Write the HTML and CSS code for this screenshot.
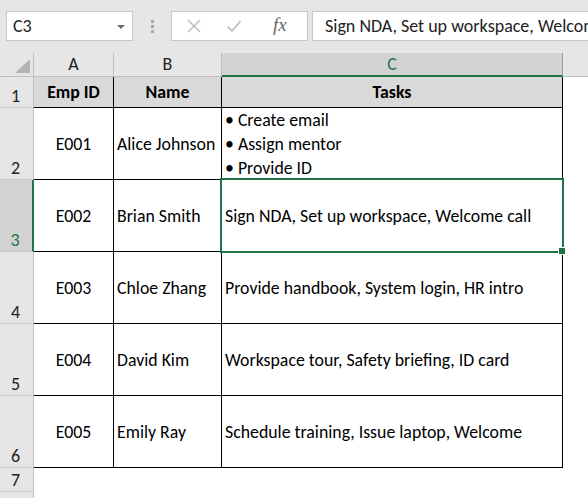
FILE: index.html
```html
<!DOCTYPE html>
<html>
<head>
<meta charset="utf-8">
<link rel="stylesheet" href="styles.css">
</head>
<body>
<div class="toolbar">
  <div class="namebox"><span class="name">C3</span><span class="drop"></span></div>
  <div class="grip"><i></i><i></i><i></i></div>
  <div class="fxbox">
    <svg class="ic-x" width="14" height="14" viewBox="0 0 14 14"><path d="M1 1L13 13M13 1L1 13" stroke="#bdbdbd" stroke-width="1.5" fill="none"/></svg>
    <svg class="ic-ok" width="16" height="14" viewBox="0 0 16 14"><path d="M1.5 7.5L6 12L14.5 2" stroke="#c2c2c2" stroke-width="1.8" fill="none"/></svg>
    <span class="fx">fx</span>
  </div>
  <div class="formula">Sign NDA, Set up workspace, Welcome call</div>
</div>
<div class="sheet">
  <div class="corner"><span class="tri"></span></div>
  <div class="colhead">A</div>
  <div class="colhead">B</div>
  <div class="colhead sel">C</div>
  <div class="colhead rest"></div>

  <div class="rowhead">1</div>
  <div class="cell th">Emp ID</div>
  <div class="cell th">Name</div>
  <div class="cell th">Tasks</div>
  <div class="blank"></div>

  <div class="rowhead">2</div>
  <div class="cell center">E001</div>
  <div class="cell">Alice Johnson</div>
  <div class="cell list"><div>• Create email</div><div>• Assign mentor</div><div>• Provide ID</div></div>
  <div class="blank"></div>

  <div class="rowhead rsel">3</div>
  <div class="cell center">E002</div>
  <div class="cell">Brian Smith</div>
  <div class="cell">Sign NDA, Set up workspace, Welcome call</div>
  <div class="blank"></div>

  <div class="rowhead">4</div>
  <div class="cell center">E003</div>
  <div class="cell">Chloe Zhang</div>
  <div class="cell">Provide handbook, System login, HR intro</div>
  <div class="blank"></div>

  <div class="rowhead">5</div>
  <div class="cell center">E004</div>
  <div class="cell">David Kim</div>
  <div class="cell">Workspace tour, Safety briefing, ID card</div>
  <div class="blank"></div>

  <div class="rowhead">6</div>
  <div class="cell center">E005</div>
  <div class="cell">Emily Ray</div>
  <div class="cell">Schedule training, Issue laptop, Welcome</div>
  <div class="blank"></div>

  <div class="rowhead">7</div>
  <div class="blank span4"></div>

  <div class="rowhead"></div>
  <div class="blank span4"></div>

  <div class="selection"><span class="handle"></span></div>
</div>
</body>
</html>
```

FILE: styles.css
```css
* { box-sizing: border-box; }
html, body { margin: 0; padding: 0; background: #fff; }
body {
  font-family: Carlito, "Liberation Sans", sans-serif;
  font-size: 17.8px;
  color: #000;
  width: 588px;
  height: 498px;
  overflow: hidden;
}
.toolbar {
  height: 53px;
  background: #e6e6e6;
  display: flex;
  align-items: flex-start;
  padding-top: 11px;
  padding-left: 6px;
}
.namebox {
  width: 127px;
  height: 30px;
  background: #fff;
  border: 1px solid #c6c6c6;
  display: flex;
  align-items: center;
  justify-content: space-between;
  padding: 0 7px 0 6px;
  font-size: 18px;
  color: #222;
}
.drop {
  width: 0; height: 0;
  border-left: 4px solid transparent;
  border-right: 4px solid transparent;
  border-top: 4px solid #6d6d6d;
  margin-top: 1px;
}
.grip {
  width: 38px;
  height: 30px;
  display: flex;
  flex-direction: column;
  align-items: center;
  justify-content: center;
  gap: 2px;
}
.grip i { display: block; width: 3px; height: 3px; background: #a8a8a8; }
.fxbox {
  width: 137px;
  height: 30px;
  background: #fff;
  border: 1px solid #c6c6c6;
  display: flex;
  align-items: center;
  padding-left: 15px;
}
.ic-x { margin-right: 25px; }
.ic-ok { margin-right: 31px; }
.fx {
  font-family: "Liberation Serif", serif;
  font-style: italic;
  font-size: 19px;
  color: #666;
  margin-top: -2px;
}
.formula {
  flex: 1;
  margin-left: 4px;
  height: 30px;
  background: #fff;
  border: 1px solid #c6c6c6;
  border-right: none;
  padding-left: 12px;
  display: flex;
  align-items: center;
  font-size: 18px;
  white-space: nowrap;
  overflow: hidden;
  color: #222;
}
.sheet {
  position: relative;
  display: grid;
  grid-template-columns: 34px 80px 108px 341px 1fr;
  grid-template-rows: 24px 31px 72px 72px 72px 72px 72px 24px 24px;
}
.corner {
  background: #e6e6e6;
  border-right: 1px solid #bfbfbf;
  border-bottom: 1px solid #bfbfbf;
  position: relative;
}
.tri {
  position: absolute;
  right: 3px;
  bottom: 3px;
  width: 0; height: 0;
  border-left: 15px solid transparent;
  border-bottom: 14px solid #b4b4b4;
}
.colhead {
  background: #e6e6e6;
  border-right: 1px solid #bfbfbf;
  border-bottom: 1px solid #bfbfbf;
  text-align: center;
  font-size: 18px;
  line-height: 23px;
  color: #222;
}
.colhead.sel {
  background: #d2d2d2;
  color: #217346;
  border-bottom: 2px solid #217346;
  border-right-color: #9b9b9b;
}
.colhead.rest { border-right: none; }
.rowhead {
  background: #e6e6e6;
  border-right: 1px solid #bfbfbf;
  border-bottom: 1px solid #c8c8c8;
  text-align: center;
  font-size: 18px;
  display: flex;
  align-items: flex-end;
  justify-content: center;
  padding-bottom: 1px;
  padding-right: 2px;
  color: #222;
  line-height: 20px;
}
.rowhead.rsel {
  background: #d2d2d2;
  color: #217346;
  border-right: 2px solid #217346;
}
.cell {
  border-right: 1px solid #000;
  border-bottom: 1px solid #000;
  display: flex;
  align-items: center;
  padding-left: 3px;
  white-space: nowrap;
}
.cell.center { justify-content: center; padding-left: 0; }
.cell.th {
  background: #d9d9d9;
  font-weight: bold;
  justify-content: center;
  padding-left: 0;
}
.cell.list {
  flex-direction: column;
  align-items: flex-start;
  justify-content: center;
  line-height: 24px;
}
.blank { background: #fff; }
.span4 { grid-column: span 4; }
.selection {
  position: absolute;
  left: 220px;
  top: 125px;
  width: 344px;
  height: 75px;
  border: 2px solid #217346;
  pointer-events: none;
}
.handle {
  position: absolute;
  right: -3px;
  bottom: -3px;
  width: 6px;
  height: 6px;
  background: #217346;
  outline: 1px solid #fff;
}
```
